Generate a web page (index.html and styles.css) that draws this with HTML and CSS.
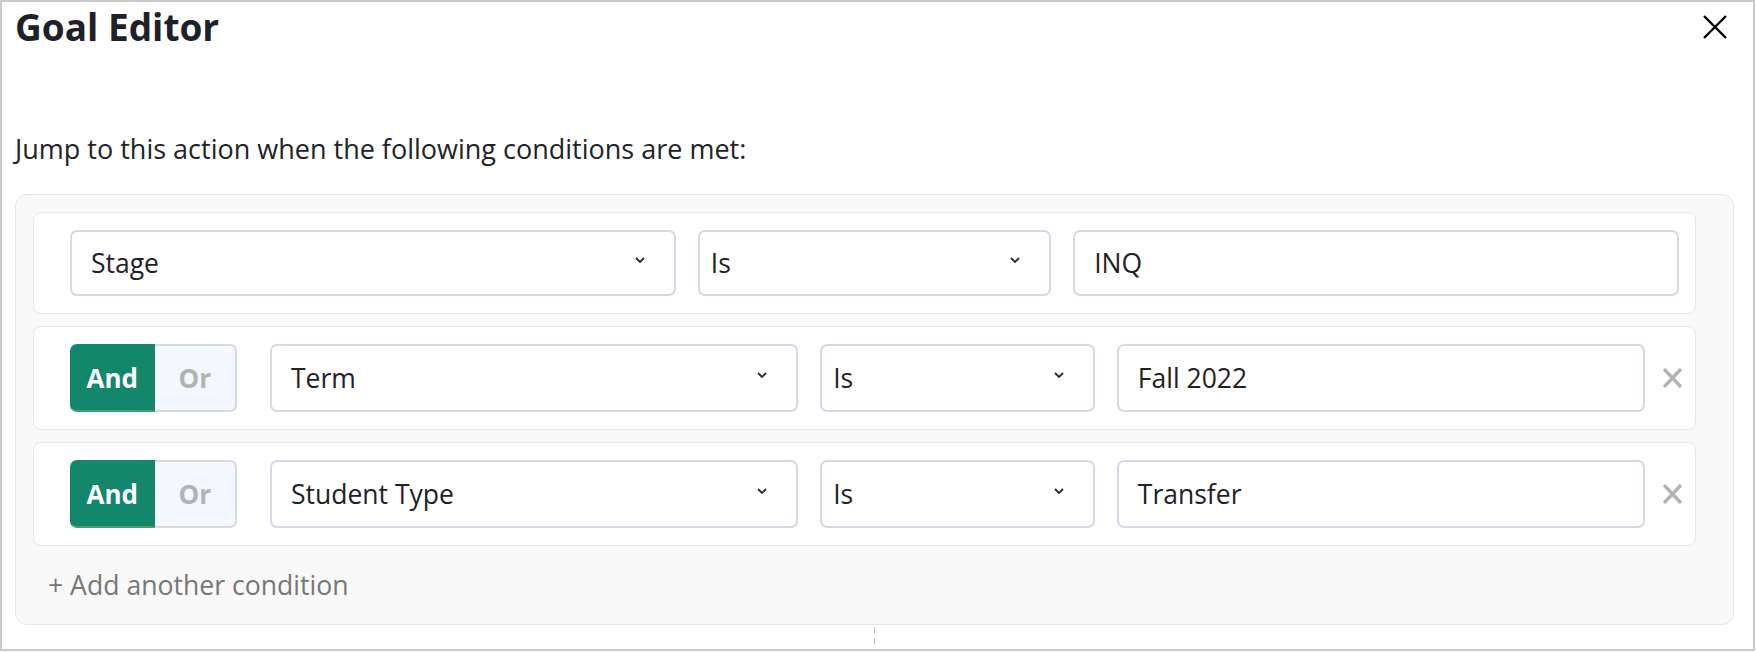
FILE: index.html
```html
<!DOCTYPE html>
<html lang="en">
<head>
    <meta charset="UTF-8">
    <meta name="viewport" content="width=device-width, initial-scale=1.0">
    <title>Goal Editor</title>
    <link rel="stylesheet" href="styles.css">
</head>
<body>
    <div class="editor">
        <div class="editor-head">
            <h1>Goal Editor</h1>
            <button class="close" aria-label="Close">
                <svg width="24" height="24" viewBox="0 0 24 24"><path d="M1 1L23 23M23 1L1 23" stroke="#000" stroke-width="2.4" fill="none"/></svg>
            </button>
        </div>

        <p class="intro">Jump to this action when the following conditions are met:</p>

        <div class="conditions">
            <!-- first condition has no and/or, no remove -->
            <div class="condition condition-first">
                <div class="fields fields-first">
                    <div class="select">Stage <svg class="chevron" width="10" height="6" viewBox="0 0 10 6"><path d="M1 1L5 5L9 1" stroke="#2a2c33" stroke-width="1.8" fill="none"/></svg></div>
                    <div class="select select-op">Is <svg class="chevron" width="10" height="6" viewBox="0 0 10 6"><path d="M1 1L5 5L9 1" stroke="#2a2c33" stroke-width="1.8" fill="none"/></svg></div>
                    <div class="value">INQ</div>
                </div>
            </div>

            <div class="condition">
                <div class="toggle"><span class="on">And</span><span>Or</span></div>
                <div class="fields">
                    <div class="select">Term <svg class="chevron" width="10" height="6" viewBox="0 0 10 6"><path d="M1 1L5 5L9 1" stroke="#2a2c33" stroke-width="1.8" fill="none"/></svg></div>
                    <div class="select select-op">Is <svg class="chevron" width="10" height="6" viewBox="0 0 10 6"><path d="M1 1L5 5L9 1" stroke="#2a2c33" stroke-width="1.8" fill="none"/></svg></div>
                    <div class="value">Fall 2022</div>
                </div>
                <button class="remove" aria-label="Remove">
                    <svg width="21" height="20" viewBox="0 0 21 20"><path d="M2 1L19 19M19 1L2 19" stroke="#b3b3b3" stroke-width="3.4" fill="none"/></svg>
                </button>
            </div>

            <div class="condition">
                <div class="toggle"><span class="on">And</span><span>Or</span></div>
                <div class="fields">
                    <div class="select">Student Type <svg class="chevron" width="10" height="6" viewBox="0 0 10 6"><path d="M1 1L5 5L9 1" stroke="#2a2c33" stroke-width="1.8" fill="none"/></svg></div>
                    <div class="select select-op">Is <svg class="chevron" width="10" height="6" viewBox="0 0 10 6"><path d="M1 1L5 5L9 1" stroke="#2a2c33" stroke-width="1.8" fill="none"/></svg></div>
                    <div class="value">Transfer</div>
                </div>
                <button class="remove" aria-label="Remove">
                    <svg width="21" height="20" viewBox="0 0 21 20"><path d="M2 1L19 19M19 1L2 19" stroke="#b3b3b3" stroke-width="3.4" fill="none"/></svg>
                </button>
            </div>

            <a class="add" href="#">+ Add another condition</a>
        </div>

        <div class="connector"></div>
    </div>
</body>
</html>
```

FILE: styles.css
```css
body {
    margin: 0;
    font-family: "Open Sans", Arial, sans-serif;
    background-color: white;
    color: #212329;
}
.editor {
    box-sizing: border-box;
    width: 1755px;
    height: 651px;
    border: 2px solid #cacaca;
    padding: 3px 19px 0 13px;
    background-color: white;
}
.editor-head {
    display: flex;
    justify-content: space-between;
    align-items: center;
}
h1 {
    margin: 0;
    font-size: 37px;
    line-height: 44px;
    font-weight: 700;
    color: #1f2129;
}
.close {
    border: none;
    background: none;
    padding: 0;
    margin-right: 7px;
    width: 24px;
    height: 24px;
    display: flex;
    cursor: pointer;
}
.intro {
    margin: 83px 0 28px;
    font-size: 27px;
    line-height: 34px;
}
.conditions {
    background-color: #f9f9f9;
    border: 1px solid #e6e6e6;
    border-radius: 12px;
    padding: 17px 37px 22px 17px;
    display: flex;
    flex-direction: column;
    gap: 12px;
}
.condition {
    display: flex;
    align-items: center;
    background-color: white;
    border: 1px solid #e8e8e8;
    border-radius: 8px;
    padding: 17px 12px 17px 36px;
    height: 68px;
}
.condition-first {
    height: 66px;
    padding-right: 16px;
}
.fields {
    flex: 1;
    display: grid;
    grid-template-columns: 25fr 13fr 25fr;
    column-gap: 22px;
    margin-left: 33px;
    height: 100%;
}
.fields-first {
    grid-template-columns: 12fr 7fr 12fr;
    margin-left: 0;
}
.select,
.value {
    box-sizing: border-box;
    height: 100%;
    border: 2px solid #d5d9e6;
    border-radius: 7px;
    background-color: white;
    display: flex;
    align-items: center;
    justify-content: space-between;
    padding: 0 29px 0 19px;
    font-size: 26.5px;
    line-height: 34px;
    color: #1f2128;
}
.select-op {
    padding-left: 11px;
}
.chevron {
    margin-top: -6px;
    flex-shrink: 0;
}
.toggle {
    display: flex;
    width: 167px;
    height: 100%;
}
.toggle span {
    flex: 1;
    display: flex;
    align-items: center;
    justify-content: center;
    font-size: 26px;
    font-weight: 700;
    color: #b3b3b3;
    background-color: #f4f7fe;
    border: 2px solid #d5d9e6;
    border-left: none;
    border-radius: 0 7px 7px 0;
}
.toggle .on {
    color: white;
    background-color: #12876b;
    border: 2px solid #12876b;
    border-bottom-color: #43a16f;
    border-radius: 7px 0 0 7px;
}
.remove {
    border: none;
    background: none;
    padding: 0;
    margin-left: 17px;
    width: 21px;
    height: 20px;
    display: flex;
    cursor: pointer;
}
.add {
    margin-top: 10px;
    padding-left: 15px;
    font-size: 26.6px;
    line-height: 34px;
    color: #777;
    text-decoration: none;
}
.connector {
    width: 1px;
    height: 17px;
    margin: 2px 0 0 859px;
    background: repeating-linear-gradient(to bottom, #bdbdbd 0 6px, transparent 6px 11px);
}
```
